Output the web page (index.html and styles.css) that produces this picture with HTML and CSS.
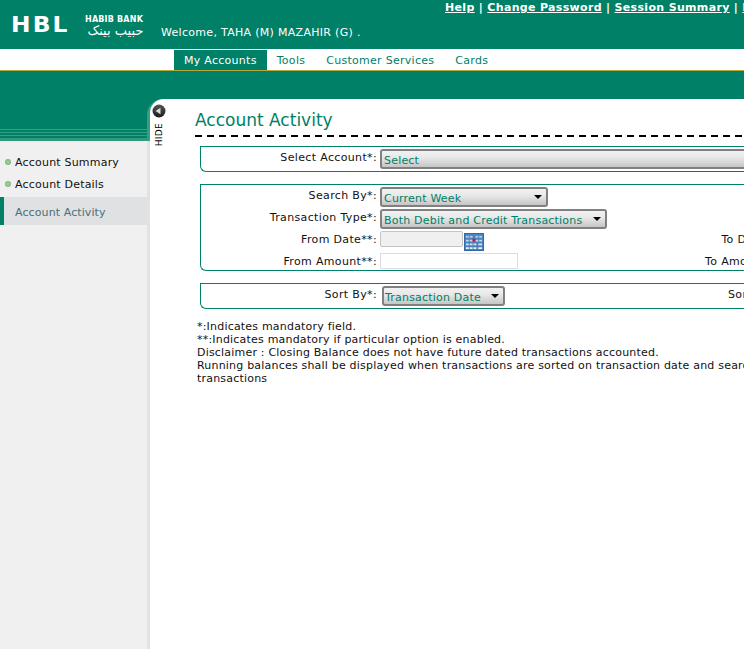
FILE: index.html
```html
<!DOCTYPE html>
<html lang="en">

<head>
    <meta charset="UTF-8">
    <meta name="viewport" content="width=device-width, initial-scale=1.0">
    <title>Account Activity</title>
    <link rel="stylesheet" href="styles.css">
</head>

<body>
    <header class="top-bar">
        <div class="logo">
            <span class="logo-hbl">HBL</span>
            <div class="logo-name">
                <span class="logo-en">HABIB BANK</span>
                <span class="logo-ur" lang="ur" dir="rtl">حبیب بینک</span>
            </div>
        </div>
        <div class="welcome">Welcome, TAHA (M) MAZAHIR (G) .</div>
        <div class="top-links">
            <a href="#">Help</a> | <a href="#">Change Password</a> | <a href="#">Session Summary</a> | <a href="#">Logout</a>
        </div>
    </header>

    <nav class="main-nav">
        <a href="#" class="nav-item active">My Accounts</a>
        <a href="#" class="nav-item">Tools</a>
        <a href="#" class="nav-item nav-spaced">Customer Services</a>
        <a href="#" class="nav-item nav-spaced">Cards</a>
    </nav>

    <div class="page-body">
        <aside class="sidebar">
            <div class="stripes"></div>
            <ul class="side-menu">
                <li class="side-link"><span class="dot"></span>Account Summary</li>
                <li class="side-link"><span class="dot"></span>Account Details</li>
                <li class="side-active">Account Activity</li>
            </ul>
        </aside>

        <div class="content-edge">
            <div class="content">
                <div class="hide-rail">
                    <svg class="hide-icon" width="14" height="14" viewBox="0 0 14 14">
                        <defs>
                            <linearGradient id="hideBall" x1="0" y1="0" x2="0" y2="1">
                                <stop offset="0" stop-color="#555" />
                                <stop offset="1" stop-color="#1c1c1c" />
                            </linearGradient>
                        </defs>
                        <circle cx="7" cy="7" r="6.5" fill="url(#hideBall)" />
                        <path d="M3.5 7 L8.5 3.8 V10.2 Z" fill="#dcdcdc" />
                    </svg>
                    <span class="hide-text">HIDE</span>
                </div>

                <main class="pane">
                    <h1 class="page-title">Account Activity</h1>

                    <div class="box box-account">
                        <label class="field-label">Select Account*:</label>
                        <div class="select select-full"><span>Select</span></div>
                    </div>

                    <div class="box box-search">
                        <label class="field-label">Search By*:</label>
                        <div class="select select-search"><span>Current Week</span><i class="caret"></i></div>
                        <span></span>

                        <label class="field-label">Transaction Type*:</label>
                        <div class="select select-type"><span>Both Debit and Credit Transactions</span><i class="caret"></i></div>
                        <span></span>

                        <label class="field-label">From Date**:</label>
                        <div class="date-field">
                            <input type="text" class="input input-date" disabled>
                            <svg class="cal-icon" width="20" height="18" viewBox="0 0 21 19">
                                <defs>
                                    <linearGradient id="calCells" x1="0" y1="0" x2="0" y2="1">
                                        <stop offset="0" stop-color="#a9c6e6" />
                                        <stop offset="1" stop-color="#eef4fa" />
                                    </linearGradient>
                                </defs>
                                <rect x="0.5" y="0.5" width="20" height="18" fill="#4a82bd" stroke="#2f65a5" />
                                <path d="M2 3h3v2H2zM6 3h3v2H6zM12 3h3v2h-3zM16 3h3v2h-3zM2 7h3v2H2zM6 7h3v2H6zM12 7h3v2h-3zM16 7h3v2h-3zM2 11h3v2H2zM6 11h3v2H6zM10 11h3v2h-3zM15 11h4v2h-4zM2 15h3v2H2zM6 15h3v2H6zM10 15h3v2h-3zM15 15h4v2h-4z" fill="url(#calCells)" />
                                <rect x="9" y="6" width="3" height="3" fill="#d0182a" />
                            </svg>
                        </div>
                        <label class="field-label">To Date**:</label>

                        <label class="field-label">From Amount**:</label>
                        <input type="text" class="input input-amount">
                        <label class="field-label">To Amount**:</label>
                    </div>

                    <div class="box box-sort">
                        <label class="field-label">Sort By*:</label>
                        <div class="select select-sort"><span>Transaction Date</span><i class="caret"></i></div>
                        <label class="field-label label-far">Sort Order*:</label>
                    </div>

                    <div class="notes">
                        *:Indicates mandatory field.<br>
                        **:Indicates mandatory if particular option is enabled.<br>
                        Disclaimer : Closing Balance does not have future dated transactions accounted.<br>
                        Running balances shall be displayed when transactions are sorted on transaction date and search is done for all<br>
                        transactions
                    </div>
                </main>
            </div>
        </div>
    </div>
</body>

</html>
```

FILE: styles.css
```css
html,
body {
    margin: 0;
    padding: 0;
    height: 649px;
    overflow: hidden;
}

body {
    font-family: "DejaVu Sans", Verdana, sans-serif;
    font-size: 11px;
    letter-spacing: 0.2px;
    color: #111;
    background-color: #fff;
    width: 744px;
}

/* top green bar */
.top-bar {
    background-color: #008066;
    color: #fff;
    height: 49px;
    display: flex;
    position: relative;
    overflow: hidden;
}

.logo {
    display: flex;
    width: 160px;
    padding: 12px 0 0 11px;
    box-sizing: border-box;
    flex-shrink: 0;
}

.logo-hbl {
    font-size: 22px;
    font-weight: bold;
    line-height: 25px;
    letter-spacing: 2px;
    width: 74px;
    transform: scaleX(1.06);
    transform-origin: left;
}

.logo-name {
    display: flex;
    flex-direction: column;
    width: 61px;
    margin-top: 2px;
}

.logo-en {
    font-size: 8px;
    font-weight: bold;
    line-height: 11px;
    white-space: nowrap;
    letter-spacing: 0.2px;
}

.logo-ur {
    font-size: 13px;
    line-height: 12px;
    white-space: nowrap;
    text-align: center;
    letter-spacing: 0;
}

.welcome {
    align-self: flex-end;
    padding: 0 0 10px 1px;
    white-space: nowrap;
    letter-spacing: 0.3px;
    width: 285px;
    flex-shrink: 0;
    box-sizing: border-box;
}

.top-links {
    font-weight: bold;
    white-space: nowrap;
    line-height: 15px;
    letter-spacing: 0.33px;
}

.top-links a {
    color: #fff;
}

/* main menu */
.main-nav {
    height: 21px;
    background-color: #fff;
    border-bottom: 1px solid #b5a83a;
    display: flex;
    padding-left: 174px;
    box-sizing: content-box;
    letter-spacing: 0.28px;
}

.nav-item {
    color: #008066;
    text-decoration: none;
    padding: 0 10px;
    margin-top: 1px;
    height: 20px;
    line-height: 22px;
    white-space: nowrap;
}

.nav-item.active {
    background-color: #008066;
    color: #fff;
}

.nav-spaced {
    margin-left: 1px;
}

/* page below the menu */
.page-body {
    display: flex;
    background-color: #008066;
    height: 578px;
}

.sidebar {
    width: 147px;
    flex-shrink: 0;
    padding-top: 56px;
    display: flex;
    flex-direction: column;
}

.stripes {
    height: 14px;
    background: repeating-linear-gradient(#008066 0, #008066 2px, #33a07f 2px, #33a07f 3px);
    border-bottom: 3px solid #33997c;
    box-sizing: border-box;
}

.side-menu {
    list-style: none;
    margin: 0;
    padding: 11px 0 0;
    flex: 1;
    background-color: #f0f0f0;
}

.side-link {
    height: 22px;
    line-height: 22px;
    padding-left: 5px;
    display: flex;
    align-items: center;
}

.dot {
    width: 6px;
    height: 6px;
    border-radius: 50%;
    background: radial-gradient(#a6d0a0, #6fae72);
    margin-right: 4px;
    position: relative;
    top: -1px;
}

.side-active {
    height: 28px;
    line-height: 31px;
    margin-top: 1px;
    border-left: 4px solid #008066;
    padding-left: 11px;
    background-color: #e0e1e3;
    color: #4a6f78;
    letter-spacing: 0.1px;
}

.content-edge {
    flex: 1;
    margin-top: 28px;
    padding-left: 3px;
    min-width: 0;
    border-top-left-radius: 16px;
    background: linear-gradient(#3a9d82 42px, #e2e2e2 42px);
}

.content {
    height: 100%;
    display: flex;
    background-color: #fff;
    border-top-left-radius: 14px;
}

.hide-rail {
    width: 16px;
    flex-shrink: 0;
    padding: 5px 0 0 2px;
    box-sizing: border-box;
    display: flex;
    flex-direction: column;
    align-items: flex-start;
}

.hide-icon {
    display: block;
}

.hide-text {
    writing-mode: vertical-rl;
    transform: rotate(180deg);
    font-size: 9px;
    line-height: 10px;
    letter-spacing: 0.3px;
    margin: 5px 0 0 2px;
    color: #000;
}

.pane {
    flex: 1;
    min-width: 0;
    padding-left: 29px;
}

.page-title {
    font-size: 17px;
    font-weight: normal;
    letter-spacing: 0;
    color: #008066;
    line-height: 22px;
    margin: 10px 0 0;
    padding-bottom: 6px;
    width: 620px;
    background: repeating-linear-gradient(90deg, #000 0, #000 7px, transparent 7px, transparent 12px) bottom / 100% 2px no-repeat;
}

/* form boxes run past the right edge of the window */
.box {
    width: 640px;
    margin-left: 5px;
    border: 1px solid #008066;
    border-right: none;
    border-radius: 0 0 0 6px;
    box-sizing: border-box;
    display: grid;
    grid-template-columns: 176px 322px 76px;
    column-gap: 3px;
    align-items: start;
    white-space: nowrap;
    padding-top: 2px;
}

.box-account {
    margin-top: 9px;
    height: 26px;
}

.box-search {
    margin-top: 12px;
    height: 87px;
    grid-auto-rows: 22px;
}

.box-sort {
    margin-top: 12px;
    height: 26px;
    grid-template-columns: 176px 345px 76px;
}

.field-label {
    text-align: right;
    line-height: 18px;
    letter-spacing: 0.35px;
}

.label-far {
    text-align: left;
}

.select {
    height: 20px;
    border: 2px solid #808080;
    border-radius: 3px;
    box-sizing: border-box;
    background: linear-gradient(#f2f2f2, #e8e8e8 40%, #c6c6c6);
    color: #008066;
    display: flex;
    justify-content: space-between;
    padding: 2px 4px 0 2px;
    line-height: 15px;
    white-space: nowrap;
}

.select-full {
    width: 500px;
}

.select-search {
    width: 168px;
}

.select-type {
    width: 227px;
}

.select-sort {
    width: 123px;
    margin-left: 2px;
    padding-left: 1px;
}

.caret {
    width: 0;
    height: 0;
    border-left: 4px solid transparent;
    border-right: 4px solid transparent;
    border-top: 4px solid #000;
    margin-top: 4px;
}

.input {
    box-sizing: border-box;
    height: 16px;
    margin: 0;
    padding: 0;
    border: 1px solid #dcdce4;
    background-color: #fff;
}

.input-amount {
    width: 138px;
}

.date-field {
    display: flex;
    align-items: flex-start;
}

.input-date {
    width: 83px;
    background-color: #f0f0f0;
    border: 1px solid #c4c4c4;
    border-radius: 2px;
}

.cal-icon {
    display: block;
    margin-top: 2px;
    margin-left: 1px;
}

.notes {
    margin: 11px 0 0 2px;
    line-height: 13px;
    white-space: nowrap;
}
```
